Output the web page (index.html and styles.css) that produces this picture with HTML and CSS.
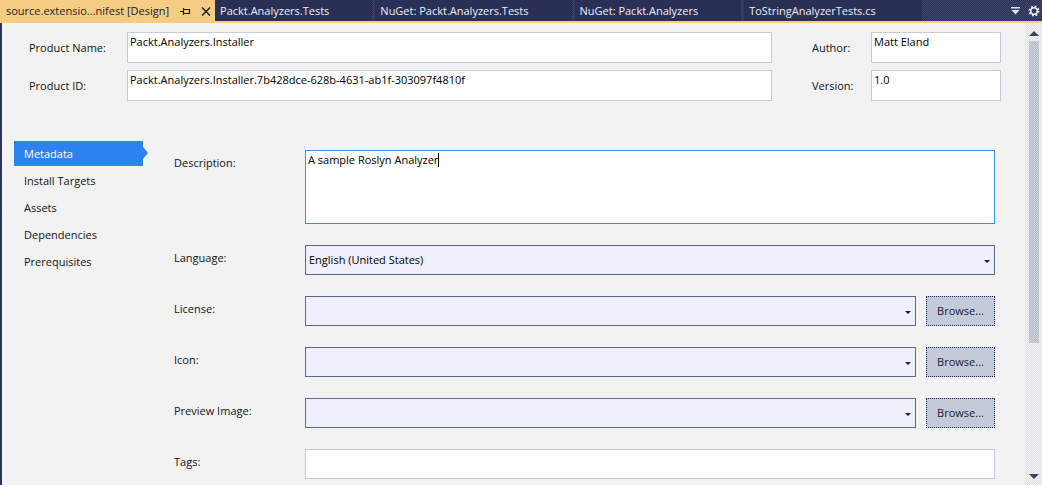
FILE: index.html
```html
<!DOCTYPE html>
<html>
<head>
<meta charset="utf-8">
<link rel="stylesheet" href="styles.css">
</head>
<body>
<div class="window">
  <div class="tabbar">
    <div class="tab tab-active">
      <span class="tab-title">source.extensio...nifest [Design]</span>
      <svg class="pin" width="11" height="9" viewBox="0 0 11 9"><path d="M0 4.5h3M3.5 1v7M3.5 2.5h6v4h-6" fill="none" stroke="#1e1e1e" stroke-width="1.2"/></svg>
      <svg class="close" width="10" height="9" viewBox="0 0 10 9"><path d="M1 0.5l8 8M9 0.5l-8 8" stroke="#1e1e1e" stroke-width="1.4"/></svg>
    </div>
    <div class="tab">Packt.Analyzers.Tests</div>
    <div class="tab">NuGet: Packt.Analyzers.Tests</div>
    <div class="tab">NuGet: Packt.Analyzers</div>
    <div class="tab tab-last">ToStringAnalyzerTests.cs</div>
    <div class="tab-spacer"></div>
    <div class="tab-tools">
      <svg width="9" height="8" viewBox="0 0 9 8"><path d="M0 0.75h9" stroke="#e6e8f2" stroke-width="1.5"/><path d="M0.5 3h8l-4 4.5z" fill="#e6e8f2"/></svg>
      <svg width="12" height="12" viewBox="0 0 12 12"><circle cx="6" cy="6" r="4.2" fill="none" stroke="#e6e8f2" stroke-width="2.6" stroke-dasharray="1.65 1.65"/><circle cx="6" cy="6" r="3.3" fill="none" stroke="#e6e8f2" stroke-width="1.6"/></svg>
    </div>
  </div>
  <div class="accent"></div>
  <div class="main">
    <div class="content">
      <div class="header">
        <div class="hlabel">Product Name:</div>
        <div class="box">Packt.Analyzers.Installer</div>
        <div class="hlabel hlabel-right">Author:</div>
        <div class="box">Matt Eland</div>
        <div class="hlabel">Product ID:</div>
        <div class="box">Packt.Analyzers.Installer.7b428dce-628b-4631-ab1f-303097f4810f</div>
        <div class="hlabel hlabel-right">Version:</div>
        <div class="box">1.0</div>
      </div>
      <div class="body">
        <ul class="nav">
          <li class="nav-item nav-active">Metadata</li>
          <li class="nav-item">Install Targets</li>
          <li class="nav-item">Assets</li>
          <li class="nav-item">Dependencies</li>
          <li class="nav-item">Prerequisites</li>
        </ul>
        <div class="form">
          <div class="flabel">Description:</div>
          <div class="textarea">A sample Roslyn Analyzer<span class="caret"></span></div>

          <div class="flabel">Language:</div>
          <div class="select select-wide">English (United States)<span class="arrow"></span></div>

          <div class="flabel">License:</div>
          <div class="pick">
            <div class="select"><span class="arrow"></span></div>
            <div class="button">Browse...</div>
          </div>

          <div class="flabel">Icon:</div>
          <div class="pick">
            <div class="select"><span class="arrow"></span></div>
            <div class="button">Browse...</div>
          </div>

          <div class="flabel">Preview Image:</div>
          <div class="pick">
            <div class="select"><span class="arrow"></span></div>
            <div class="button">Browse...</div>
          </div>

          <div class="flabel">Tags:</div>
          <div class="tags"></div>
        </div>
      </div>
    </div>
    <div class="scrollbar">
      <div class="sb-up"></div>
      <div class="sb-thumb"></div>
      <div class="sb-track"></div>
      <div class="sb-down"></div>
    </div>
  </div>
</div>
</body>
</html>
```
FILE: styles.css
```css
* { box-sizing: border-box; }
html, body { margin: 0; padding: 0; }
body {
  width: 1042px;
  height: 485px;
  overflow: hidden;
  font-family: "Open Sans", "Noto Sans", sans-serif;
  font-size: 11px;
  line-height: 16px;
  color: #141414;
  background: #f2f2f3;
}
.window { width: 1042px; height: 485px; display: flex; flex-direction: column; }

/* tab bar */
.tabbar {
  display: flex;
  height: 21px;
  flex: none;
  background: repeating-conic-gradient(#293052 0 25%, #3f4670 0 50%) 0 0 / 2px 2px;
}
.tab {
  background: #2a3055;
  color: #eceef8;
  padding: 0 43px 0 5px;
  margin-right: 3px;
  line-height: 21px;
  white-space: nowrap;
}
.tab-last { padding-right: 46px; }
.tab-active {
  background: #f5cc84;
  color: #1e1e1e;
  padding: 0 4px 0 6px;
  margin-right: 0;
  display: flex;
  align-items: center;
}
.tab-title { margin-right: 11px; }
.pin { margin-right: 10px; margin-top: 1px; }
.close { margin-top: 1px; }
.tab-spacer { flex: 1; }
.tab-tools {
  display: flex;
  align-items: center;
  gap: 8px;
  padding-right: 2px;
}
.accent { height: 2px; flex: none; background: #f5cc84; }

/* main */
.main { flex: 1; display: flex; min-height: 0; }
.content {
  flex: 1;
  border-left: 2px solid #2d3459;
  background: #f2f2f3;
}

.header {
  display: grid;
  grid-template-columns: 98px 645px 99px 130px;
  grid-auto-rows: 31px;
  row-gap: 7px;
  padding: 9px 0 0 27px;
  align-items: center;
}
.hlabel { color: #141414; }
.hlabel-right { padding-left: 40px; }
.box {
  height: 31px;
  background: #ffffff;
  border: 1px solid #c6ccd6;
  padding: 1px 2px;
  color: #000;
  font-size: 11px;
}

.body { display: flex; margin-top: 40px; }
.nav {
  list-style: none;
  margin: 0 0 0 12px;
  padding: 0;
  width: 134px;
  display: flex;
  flex-direction: column;
  gap: 2px;
}
.nav-item {
  width: 129px;
  height: 25px;
  line-height: 25px;
  padding-left: 10px;
  color: #141414;
}
.nav-active {
  position: relative;
  background: #2e82f0;
  color: #ffffff;
}
.nav-active::after {
  content: "";
  position: absolute;
  left: 129px;
  top: 6px;
  border-left: 5px solid #2e82f0;
  border-top: 6px solid transparent;
  border-bottom: 6px solid transparent;
}

.form {
  margin-left: 26px;
  margin-right: 30px;
  padding-top: 9px;
  flex: 1;
  display: grid;
  grid-template-columns: 131px 1fr;
  row-gap: 21px;
  align-items: start;
}
.flabel { padding-top: 5px; }
.textarea {
  height: 74px;
  background: #ffffff;
  border: 1px solid #3a8cf2;
  padding: 1px 2px;
  color: #000;
}
.caret {
  display: inline-block;
  width: 1px;
  height: 14px;
  background: #000;
  vertical-align: -3px;
}
.select {
  position: relative;
  height: 30px;
  line-height: 28px;
  background: #eef0fb;
  border: 1px solid #5f6790;
  padding-left: 3px;
  color: #000;
}
.pick .select { flex: 1; }
.arrow {
  position: absolute;
  right: 4px;
  top: 14px;
  border-top: 3px solid #1e1e1e;
  border-left: 3px solid transparent;
  border-right: 3px solid transparent;
}
.pick { display: flex; gap: 10px; }
.button {
  width: 69px;
  height: 30px;
  line-height: 28px;
  text-align: center;
  background: #c4cad7;
  border: 1px dotted #1f2756;
  color: #141a3a;
}
.tags {
  height: 30px;
  background: #ffffff;
  border: 1px solid #c6ccd6;
}

/* scrollbar */
.scrollbar {
  width: 17px;
  flex: none;
  display: flex;
  flex-direction: column;
  align-items: center;
  background: repeating-conic-gradient(#dfe0e6 0 25%, #f4f4f6 0 50%) 0 0 / 2px 2px;
}
.sb-up {
  margin-top: 8px;
  border-bottom: 5px solid #3a4066;
  border-left: 5px solid transparent;
  border-right: 5px solid transparent;
}
.sb-thumb {
  margin-top: 5px;
  width: 10px;
  height: 302px;
  background: repeating-conic-gradient(#b4b8c6 0 25%, #d2d4de 0 50%) 0 0 / 2px 2px;
}
.sb-track { flex: 1; }
.sb-down {
  margin-bottom: 6px;
  border-top: 5px solid #3a4066;
  border-left: 5px solid transparent;
  border-right: 5px solid transparent;
}
```
